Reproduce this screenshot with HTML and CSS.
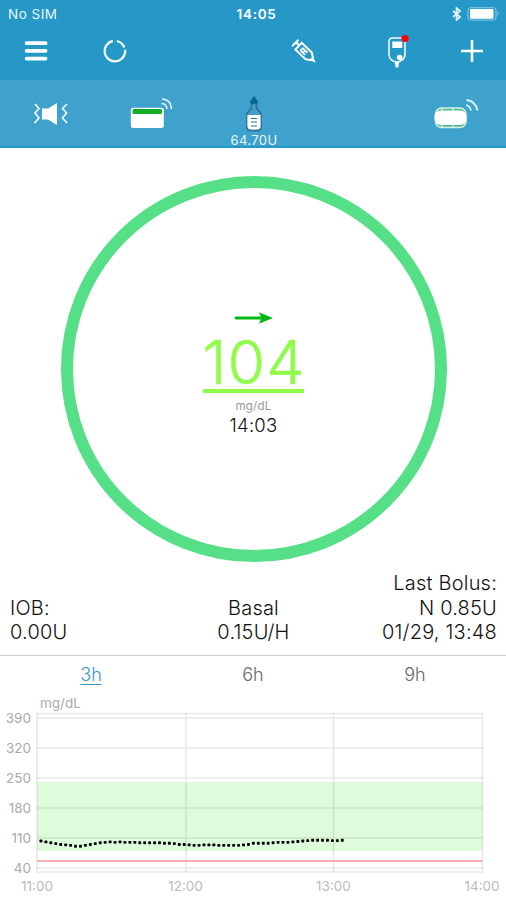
FILE: index.html
```html
<!DOCTYPE html>
<html lang="en">
<head>
    <meta charset="UTF-8">
    <meta name="viewport" content="width=device-width, initial-scale=1.0">
    <title>Glucose Monitor</title>
    <link rel="stylesheet" href="styles.css">
</head>
<body>
    <!-- Header -->
    <header class="header">
        <div class="status-bar">
            <span class="carrier">No SIM</span>
            <span class="status-time">14:05</span>
            <div class="status-icons">
                <svg width="10" height="14" viewBox="0 0 10 14" fill="none" stroke="#e4f5fc" stroke-width="1.7"><path d="M1 4l7 6-3.5 3V1L8 4l-7 6"/></svg>
                <svg width="33" height="14" viewBox="0 0 33 14"><rect x="1" y=".7" width="28" height="12.3" rx="2.5" fill="none" stroke="#8fcbe4"/><rect x="3" y="2" width="23.5" height="9.7" rx="1" fill="#fff"/><path d="M30.5 4.5q2.3 2.3 0 4.6z" fill="#8fcbe4"/></svg>
            </div>
        </div>
        <nav class="toolbar">
            <svg width="24" height="22" viewBox="0 0 24 22" stroke="#fff" stroke-width="3.8" stroke-linecap="round"><path d="M2.6 3.2h19M2.6 10.8h19M2.6 18.6h19"/></svg>
            <svg width="26" height="26" viewBox="0 0 26 26" fill="none" stroke="#f2fbff" stroke-width="2.3"><path d="M10.8 3A10.3 10.3 0 1 0 23.1 14.5M14.8 3A10.3 10.3 0 0 1 22.3 9.5M23 11.8A10.3 10.3 0 0 1 22.9 15.5"/></svg>
            <svg width="26" height="28" viewBox="0 0 26 28" fill="none" stroke="#fff" stroke-width="2"><g transform="translate(4.3 6) rotate(44)"><path d="M0-4.5V4.5M0-1h5M4.5-4.6h14l4.5 3v3.2l-4.5 3h-14z"/><path d="M22-2.5l6.5 2.5L22 2.5z" fill="#fff" stroke="none"/><path d="M8.5-1.5h7M8.5 1.7h7M9-1.5v3.2M12.3-1.5v3.2" stroke-width="1.7"/></g></svg>
            <svg width="24" height="34" viewBox="0 0 24 34"><path d="M6.5 4h8.5q4 0 4 4v12q0 7-8 8Q3 27 3 20V8q0-4 3.5-4z" fill="none" stroke="#f0faff" stroke-width="1.6"/><path d="M6.3 7.5h10v6.5h-10z" fill="#fff"/><circle cx="13.7" cy="23.5" r="2.8" fill="#fff"/><path d="M8.7 28h4.5l-1 5.5H9.7z" fill="#fff"/><circle cx="19" cy="4.5" r="3.6" fill="#f00"/></svg>
            <svg width="22" height="22" viewBox="0 0 22 22" stroke="#fff" stroke-width="2.6"><path d="M11 0v22M0 11h22"/></svg>
        </nav>
    </header>

    <!-- Device state -->
    <section class="devices">
        <svg width="36" height="24" viewBox="0 0 36 24"><path d="M10 6.5h6L25 1v22l-9-5.5h-6z" fill="#fff"/><path d="M3 2l4 4.5-4 4.5 4 5-4.5 5M35 2l-4.5 4.5 4 4.5-4 5 4.5 5" fill="none" stroke="#f1faff" stroke-width="1.7"/></svg>
        <svg width="44" height="32" viewBox="0 0 44 32"><rect x=".8" y="10.8" width="33" height="20.2" rx="2.5" fill="#fff"/><rect x="2.5" y="12" width="29.5" height="5" rx="1.5" fill="#13ae24"/><g fill="none" stroke="#e6f5fc" stroke-width="1.6"><path d="M31.5 6.5q5 .2 5.5 5.5M32 2q9 .3 9.5 10"/></g></svg>
        <div class="reservoir">
            <svg width="18" height="37" viewBox="0 0 18 37"><path d="M6.5 7.5h5v4q0 2 3 4 1.7 1 1.7 4v11q0 4.3-4 4.3H6q-4.2 0-4.2-4.3v-11q0-3 1.7-4 3-2 3-4z" fill="#45a0c4" stroke="#2c7397" stroke-width="1.6"/><path d="M9 0l3.7 5v2.5H5.3V5z" fill="#08668f"/><path d="M2.4 19h13.2V30q0 3.6-4 3.6H6.7q-4.3 0-4.3-3.6z" fill="#fff"/><path d="M6 22.5h6M6 26h6M6 30h6" stroke="#28718f" stroke-width="1.2"/></svg>
            <span>64.70U</span>
        </div>
        <svg width="46" height="32" viewBox="0 0 46 32"><rect x="2.5" y="10" width="30.5" height="19.5" rx="6" fill="#55b894" stroke="#d6f1dd" stroke-width="1.5"/><rect x="1.5" y="12.5" width="32" height="14.5" rx="6" fill="#fff"/><path d="M9 10v3M20 10v3M9 27v3M20 27v3" stroke="#fff"/><g fill="none" stroke="#d9f0f9" stroke-width="1.8"><path d="M33 7q4 1 5 5.5M33.5 2q9 1 11 10.5"/></g></svg>
    </section>

    <!-- Current reading -->
    <main class="reading">
        <div class="ring">
            <svg class="trend" width="40" height="12" viewBox="0 0 40 12"><path d="M2 6h27" stroke="#05b914" stroke-width="2.8" stroke-linecap="round"/><path d="M25 .3L39 6l-14 5.7L27.5 6z" fill="#05b914"/></svg>
            <div class="glucose">104</div>
            <div class="unit">mg/dL</div>
            <div class="reading-time">14:03</div>
        </div>
    </main>

    <!-- Insulin summary -->
    <section class="summary">
        <div class="iob">IOB:<br>0.00U</div>
        <div class="basal">Basal<br>0.15U/H</div>
        <div class="bolus">Last Bolus:<br>N 0.85U<br>01/29, 13:48</div>
    </section>

    <!-- History chart -->
    <nav class="tabs">
        <span class="tab active">3h</span>
        <span class="tab">6h</span>
        <span class="tab">9h</span>
    </nav>
    <svg class="chart" width="506" height="206" viewBox="0 694 506 206">
        <rect x="37" y="782" width="445.5" height="69" fill="#defbdc"/>
        <g class="grid">
            <path d="M37 713.5h445.5v158.5H37z"/>
            <path d="M37 718h445.5M37 748h445.5M37 778h445.5M37 808h445.5M37 838h445.5M37 868h445.5M186 713v159M333.5 713v159"/>
        </g>
        <path d="M37 861h445.5" stroke="#ff9294" stroke-width="1.6"/>
        <g id="dots"></g>
        <g class="y-labels">
            <text x="31" y="722.5">390</text>
            <text x="31" y="752.5">320</text>
            <text x="31" y="782.5">250</text>
            <text x="31" y="812.5">180</text>
            <text x="31" y="842.5">110</text>
            <text x="31" y="872.5">40</text>
        </g>
        <g class="x-labels">
            <text x="37" y="890.5">11:00</text>
            <text x="185.5" y="890.5">12:00</text>
            <text x="333.5" y="890.5">13:00</text>
            <text x="482" y="890.5">14:00</text>
        </g>
        <text class="chart-unit" x="40" y="707.5">mg/dL</text>
    </svg>

    <script>
        /* Glucose readings, oldest first */
        const readings = [103, 101, 99, 97, 95, 94, 93, 91, 91, 93, 95, 97, 99, 100, 101, 100, 101, 100, 100, 100, 99, 99, 99, 99, 99, 98, 98, 97, 95, 95, 94, 93, 93, 94, 94, 94, 93, 93, 93, 93, 93, 94, 95, 98, 98, 98, 98, 99, 100, 100, 100, 101, 102, 103, 104, 105, 105, 105, 105, 104, 104, 105];
        const dots = document.getElementById('dots');
        readings.forEach((value, i) => {
            const dot = document.createElementNS('http://www.w3.org/2000/svg', 'rect');
            dot.setAttribute('x', 39.5 + i * 4.94);
            dot.setAttribute('y', 868 - (value - 40) * 3 / 7 - 1.4);
            dot.setAttribute('width', 2.9);
            dot.setAttribute('height', 2.9);
            dot.setAttribute('rx', 0.7);
            dots.appendChild(dot);
        });
    </script>
</body>
</html>
```
FILE: styles.css
```css
/* General body styling */
* {
    box-sizing: border-box;
}

body {
    width: 506px;
    height: 900px;
    margin: 0;
    overflow: hidden;
    background-color: #fff;
    color: #111;
    font-family: Inter, "Liberation Sans", sans-serif;
}

svg {
    display: block;
    flex: none;
}

/* Header */
.header {
    height: 80px;
    background-color: #2598c8;
    color: white;
}

.status-bar {
    display: grid;
    grid-template-columns: 1fr auto 1fr;
    align-items: center;
    height: 26px;
    padding: 1px 6px 0 8px;
    font-size: 13.5px;
}

.carrier {
    color: #eaf7fd;
    letter-spacing: 0.5px;
}

.status-time {
    padding-left: 5px;
    font-weight: 600;
    letter-spacing: 0.7px;
}

.status-icons {
    display: flex;
    justify-content: flex-end;
    gap: 5px;
}

.toolbar {
    display: grid;
    grid-template-columns: 78px 189px 95px 75px 22px;
    align-items: center;
    height: 50px;
    padding-left: 24px;
}

/* Device row */
.devices {
    display: grid;
    grid-template-columns: 98px 107px 98px 1fr 73px;
    height: 68px;
    padding-left: 32px;
    padding-top: 16px;
    border-bottom: 2px solid #2598c8;
    background-color: #3fa2cd;
}

.devices > svg:first-child {
    margin-top: 6px;
}

.devices > svg:last-child {
    grid-column: 5;
    margin-top: 2px;
}

.devices > svg:nth-child(2) {
    margin-top: 1px;
}

.reservoir {
    display: flex;
    flex-direction: column;
    align-items: center;
    width: 50px;
    margin-left: -8px;
    color: #e9f7fc;
    font-size: 13px;
    letter-spacing: 0.4px;
    line-height: 14px;
}

/* Current reading */
.reading {
    display: flex;
    justify-content: center;
    padding: 28px 0 0 1px;
    height: 422px;
}

.ring {
    display: flex;
    flex-direction: column;
    align-items: center;
    width: 386px;
    height: 386px;
    padding-top: 124px;
    border: 12px solid #55df87;
    border-radius: 50%;
}

.glucose {
    width: 101px;
    height: 67px;
    margin: 2px 1px 0 0;
    border-bottom: 4px solid #91fb4b;
    color: #91fb4b;
    font-size: 61px;
    font-weight: 300;
    letter-spacing: 1px;
    line-height: 72px;
    text-align: center;
    white-space: nowrap;
    -webkit-text-stroke: 0.5px #91fb4b;
}

.unit {
    margin-top: 6px;
    color: #999;
    font-size: 11.5px;
    letter-spacing: 0.2px;
    line-height: 15px;
}

.reading-time {
    font-size: 18.5px;
    font-weight: 300;
    letter-spacing: 0.2px;
    line-height: 23px;
}

/* Insulin summary */
.summary {
    display: grid;
    grid-template-columns: 1fr 1fr 1fr;
    align-items: end;
    height: 86px;
    padding: 0 9px 10.5px 10px;
    border-bottom: 1px solid #ccc;
    font-size: 20px;
    font-weight: 300;
    letter-spacing: 0.2px;
    line-height: 24.5px;
}

.basal {
    text-align: center;
}

.bolus {
    text-align: right;
}

/* Range tabs */
.tabs {
    display: grid;
    grid-template-columns: 1fr 1fr 1fr;
    height: 38px;
    padding: 0 10px;
    color: #666;
    font-size: 18px;
    font-weight: 300;
    line-height: 37px;
    text-align: center;
}

.active {
    color: #3596cb;
    text-decoration: underline;
    text-decoration-thickness: 1px;
    text-underline-offset: 3px;
}

/* Chart */
.chart {
    font-size: 13.5px;
}

.grid {
    fill: none;
    stroke: #000;
    stroke-opacity: 0.09;
    stroke-width: 1.6;
}

.y-labels {
    fill: #aaa;
    text-anchor: end;
}

.x-labels {
    fill: #bbb;
    text-anchor: middle;
}

.chart-unit {
    fill: #aaa;
}
```
